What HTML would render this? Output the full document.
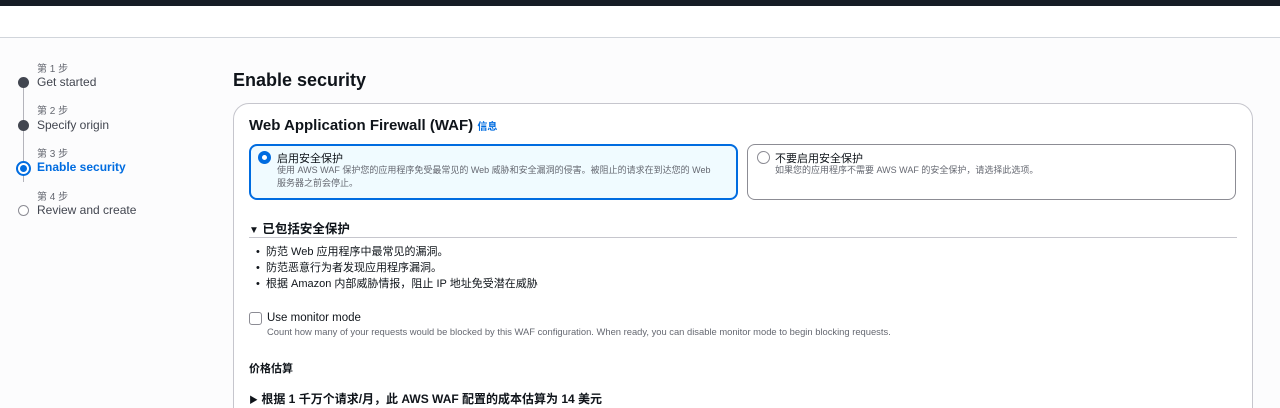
<!DOCTYPE html>
<html><head><meta charset="utf-8"><style>
*{margin:0;padding:0;box-sizing:border-box}
html,body{width:1280px;height:408px;overflow:hidden}
body{background:#fcfcfd;font-family:"Liberation Sans","Noto Sans CJK SC",sans-serif;color:#0f141a;position:relative}
.top{position:absolute;left:0;top:0;width:1280px;height:6px;background:#161d26}
.hdr{position:absolute;left:0;top:6px;width:1280px;height:32px;background:#fff;border-bottom:1px solid #d1d5db}
.abs{position:absolute;white-space:nowrap}
.sl{font-size:10px;color:#656871}
.sn{font-size:12px;color:#424650}
.dot{position:absolute;width:11px;height:11px;border-radius:50%;background:#424650}
.vl{position:absolute;left:23px;width:1px;background:#b4b4bb}
.card{position:absolute;left:233px;top:103px;width:1020px;height:330px;background:#fff;border:1px solid #c6c6cd;border-radius:16px}
.tile{position:absolute;top:144px;height:56px;border:1px solid #8c8c94;border-radius:8px;background:#fff}
.t1{font-size:11px;color:#0f141a}
.t2{font-size:9px;color:#656871;line-height:13px}
.li{font-size:11px;color:#0f141a}
</style></head><body>
<div class="top"></div><div class="hdr"></div>
<div class="vl" style="top:82px;height:100px"></div>
<div class="abs sl" style="left:37px;top:60px">第 1 步</div>
<div class="dot" style="left:18px;top:77px"></div>
<div class="abs sn" style="left:37px;top:75px">Get started</div>
<div class="abs sl" style="left:37px;top:102px">第 2 步</div>
<div class="dot" style="left:18px;top:120px"></div>
<div class="abs sn" style="left:37px;top:118px">Specify origin</div>
<div class="abs sl" style="left:37px;top:145px">第 3 步</div>
<div style="position:absolute;left:16px;top:161px;width:15px;height:15px;border-radius:50%;border:2px solid #006ce0;background:#fff"></div>
<div style="position:absolute;left:20px;top:165px;width:7px;height:7px;border-radius:50%;background:#006ce0"></div>
<div class="abs" style="left:37px;top:160px;font-size:12px;font-weight:bold;color:#006ce0">Enable security</div>
<div class="abs sl" style="left:37px;top:188px">第 4 步</div>
<div style="position:absolute;left:18px;top:205px;width:11px;height:11px;border-radius:50%;border:1px solid #8c8c94;background:#fff"></div>
<div class="abs sn" style="left:37px;top:203px">Review and create</div>

<div class="abs" style="left:233px;top:70px;font-size:18px;font-weight:bold">Enable security</div>
<div class="card"></div>
<div class="abs" style="left:249px;top:117px;font-size:15px;font-weight:bold">Web Application Firewall (WAF) <span style="font-size:10px;color:#006ce0;font-weight:bold">信息</span></div>

<div class="tile" style="left:249px;width:489px;border:2px solid #006ce0;background:#f0fbff"></div>
<div style="position:absolute;left:258px;top:151px;width:13px;height:13px;border-radius:50%;border:4px solid #006ce0;background:#fff"></div>
<div class="abs t1" style="left:277px;top:150px">启用安全保护</div>
<div class="abs t2" style="left:277px;top:164px">使用 AWS WAF 保护您的应用程序免受最常见的 Web 威胁和安全漏洞的侵害。被阻止的请求在到达您的 Web<br>服务器之前会停止。</div>

<div class="tile" style="left:747px;width:489px"></div>
<div style="position:absolute;left:757px;top:151px;width:13px;height:13px;border-radius:50%;border:1px solid #8c8c94;background:#fff"></div>
<div class="abs t1" style="left:775px;top:150px">不要启用安全保护</div>
<div class="abs t2" style="left:775px;top:164px">如果您的应用程序不需要 AWS WAF 的安全保护，请选择此选项。</div>

<div class="abs" style="left:249px;top:218px;font-size:12.5px;font-weight:bold"><span style="font-size:10px">▼</span> 已包括安全保护</div>
<div style="position:absolute;left:249px;top:237px;width:988px;height:1px;background:#c6c6cd"></div>
<div class="abs li" style="left:256px;top:244px;line-height:16px">•&nbsp; 防范 Web 应用程序中最常见的漏洞。<br>•&nbsp; 防范恶意行为者发现应用程序漏洞。<br>•&nbsp; 根据 Amazon 内部威胁情报，阻止 IP 地址免受潜在威胁</div>

<div style="position:absolute;left:249px;top:312px;width:13px;height:13px;border:1px solid #8c8c94;border-radius:3px;background:#fff"></div>
<div class="abs" style="left:267px;top:312px;font-size:11.5px">Use monitor mode</div>
<div class="abs t2" style="left:267px;top:325px;font-size:9.4px">Count how many of your requests would be blocked by this WAF configuration. When ready, you can disable monitor mode to begin blocking requests.</div>

<div class="abs" style="left:249px;top:360px;font-size:11px;font-weight:bold">价格估算</div>
<div class="abs" style="left:249px;top:390px;font-size:12px;font-weight:bold"><span style="font-size:9px">▶</span> 根据 1 千万个请求/月，此 AWS WAF 配置的成本估算为 14 美元</div>
</body></html>
